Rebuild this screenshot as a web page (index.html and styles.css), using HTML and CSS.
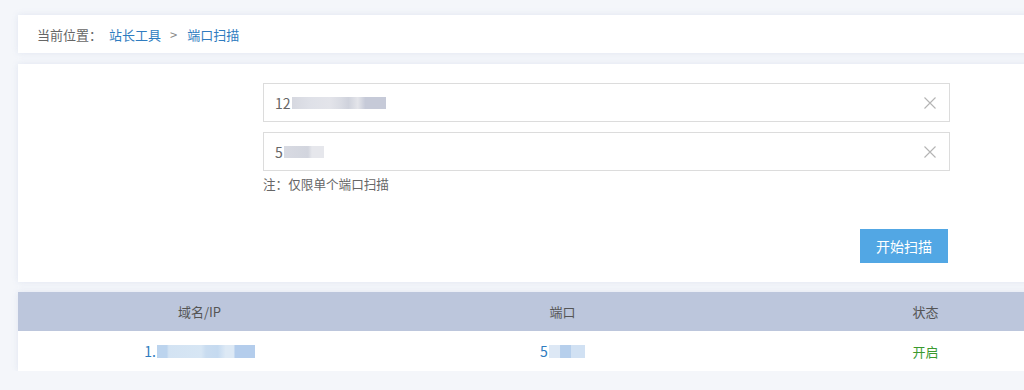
FILE: index.html
```html
<!DOCTYPE html>
<html lang="zh-CN">
<head>
  <meta charset="UTF-8">
  <meta name="viewport" content="width=device-width, initial-scale=1.0">
  <title>端口扫描</title>
  <link rel="stylesheet" href="styles.css">
</head>
<body>
<div class="page">
  <div class="card crumbs">
    <span class="crumb-label">当前位置：</span>
    <a href="#" class="crumb-link">站长工具</a>
    <span class="crumb-sep">&gt;</span>
    <a href="#" class="crumb-link">端口扫描</a>
  </div>

  <div class="card scan">
    <form class="scan-form" onsubmit="return false">
      <div class="field">
        <span class="field-text">12<span class="mask mask-host"></span></span>
        <svg class="clear" width="12" height="12" viewBox="0 0 12 12"><path d="M0.5 0.5L11.5 11.5M11.5 0.5L0.5 11.5" stroke="#b4b4b4" stroke-width="1.1" fill="none"/></svg>
      </div>
      <div class="field">
        <span class="field-text">5<span class="mask mask-port"></span></span>
        <svg class="clear" width="12" height="12" viewBox="0 0 12 12"><path d="M0.5 0.5L11.5 11.5M11.5 0.5L0.5 11.5" stroke="#b4b4b4" stroke-width="1.1" fill="none"/></svg>
      </div>
      <p class="note">注：仅限单个端口扫描</p>
      <div class="actions">
        <button type="submit" class="btn">开始扫描</button>
      </div>
    </form>
  </div>

  <table class="card result">
    <tr>
      <th>域名/IP</th>
      <th>端口</th>
      <th>状态</th>
    </tr>
    <tr>
      <td class="val">1.<span class="mask mask-row-host"></span></td>
      <td class="val">5<span class="mask mask-row-port"></span></td>
      <td class="open">开启</td>
    </tr>
  </table>
</div>
</body>
</html>
```

FILE: styles.css
```css
body {
  margin: 0;
  background: #f4f6fa;
  font-family: "Noto Sans CJK SC", "Liberation Sans", sans-serif;
  color: #555;
  overflow-x: hidden;
}
.page {
  width: 1089px;
  padding: 15px 0 0 18px;
}
.card {
  background: #fff;
  box-shadow: 0 0 6px rgba(200, 210, 230, 0.45);
}

/* breadcrumb */
.crumbs {
  height: 38px;
  display: flex;
  align-items: center;
  padding-left: 19px;
  font-size: 13px;
  margin-bottom: 11px;
}
.crumb-label {
  color: #666;
  margin-right: 7px;
}
.crumb-link {
  color: #2f7cc0;
  text-decoration: none;
}
.crumb-sep {
  color: #888;
  margin: 0 10px 0 9px;
}

/* form */
.scan {
  padding: 19px 0 19px 245px;
  margin-bottom: 10px;
}
.scan-form {
  width: 687px;
}
.field {
  height: 37px;
  border: 1px solid #dcdcdc;
  display: flex;
  align-items: center;
  justify-content: space-between;
  padding: 0 13px 0 11px;
  margin-bottom: 10px;
}
.field-text {
  font-size: 14px;
  color: #666;
  display: flex;
  align-items: center;
}
.note {
  margin: -5px 0 0;
  font-size: 12.6px;
  line-height: 16px;
  color: #666;
}
.actions {
  display: flex;
  justify-content: flex-end;
  padding-right: 2px;
  margin-top: 37px;
}
.btn {
  width: 88px;
  height: 34px;
  background: #52a7e4;
  color: #fff;
  border: none;
  font-family: inherit;
  font-size: 14px;
  cursor: pointer;
}

/* blurred values */
.mask {
  display: inline-block;
  height: 12px;
  margin-left: 1px;
}
.mask-host {
  width: 94px;
  background: linear-gradient(90deg, #d6d8e0 0, #dfe1e8 20%, #e3e4ea 40%, #d9dbe3 52%, #cfd2dc 60%, #e4e5ea 70%, #c6cad8 78%, #c6cad8 100%);
}
.mask-port {
  width: 40px;
  background: linear-gradient(90deg, #d8dae2 0, #d2d5de 60%, #e6e7ec 70%, #e6e7ec 100%);
}
.mask-row-host {
  width: 98px;
  height: 13px;
  background: linear-gradient(90deg, #bcd4ee 0, #bcd4ee 10%, #d3e3f3 12%, #d7e6f4 45%, #c9dcf0 50%, #c5daf0 62%, #dde9f5 70%, #dde9f5 78%, #b4cdec 80%, #b4cdec 100%);
}
.mask-row-port {
  width: 36px;
  height: 13px;
  background: linear-gradient(90deg, #dde8f5 0, #dde8f5 30%, #b6cfec 32%, #b6cfec 60%, #d1e1f3 62%, #d1e1f3 100%);
}

/* result table */
.result {
  width: 1089px;
  border-collapse: collapse;
  font-size: 13px;
}
.result th {
  background: #bcc6dc;
  color: #555;
  font-weight: normal;
  height: 39px;
  padding: 0;
  width: 33.33%;
}
.result td {
  height: 40px;
  padding: 0;
  text-align: center;
}
.result td.val {
  color: #2f7cc0;
  font-size: 14px;
}
.result td.val .mask {
  vertical-align: -1px;
}
.result td.open {
  color: #3b9a2e;
}
```
